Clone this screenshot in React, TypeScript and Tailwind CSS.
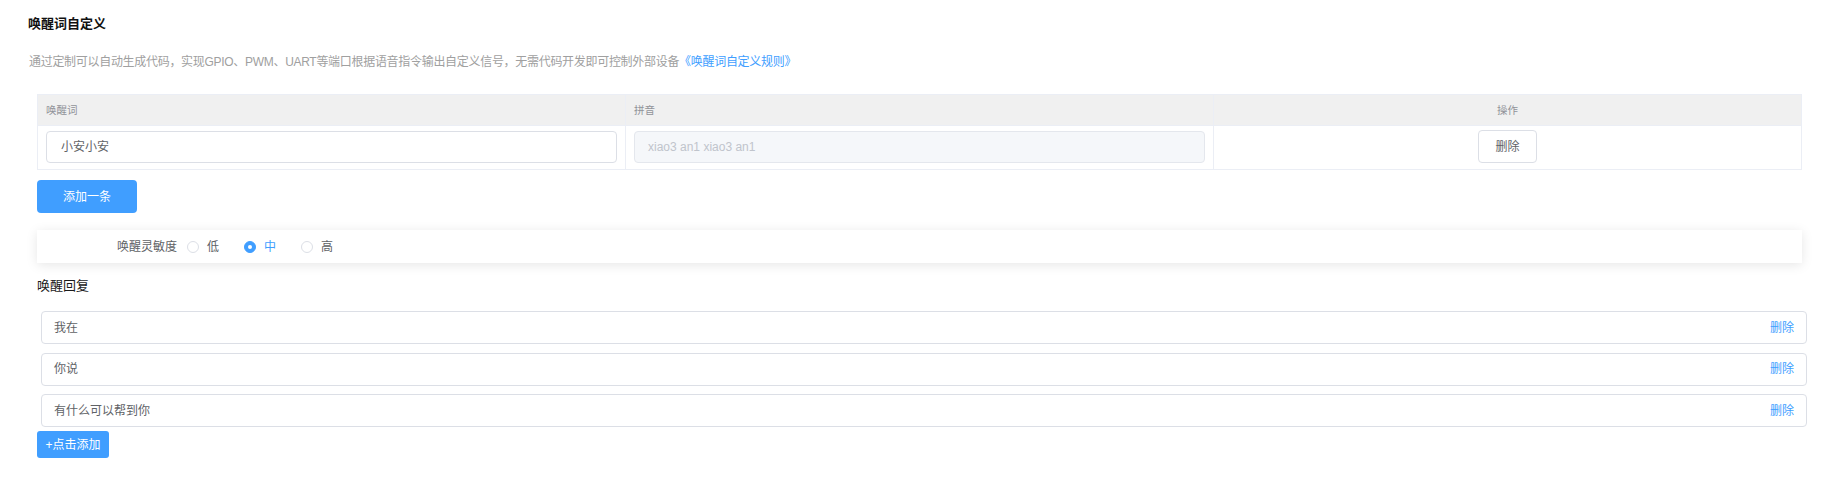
import React from "react";

const replies = ["我在", "你说", "有什么可以帮到你"];

function Radio({ label, checked }: { label: string; checked?: boolean }) {
  return (
    <label className="flex items-center mr-[25px] cursor-pointer">
      {checked ? (
        <span className="w-[12px] h-[12px] rounded-full bg-[#409eff] border border-[#409eff] flex items-center justify-center">
          <span className="w-[4px] h-[4px] rounded-full bg-white" />
        </span>
      ) : (
        <span className="w-[12px] h-[12px] rounded-full bg-white border border-[#dcdfe6]" />
      )}
      <span className={`ml-[8px] text-[12px] leading-[16px] ${checked ? "text-[#409eff]" : "text-[#606266]"}`}>{label}</span>
    </label>
  );
}

export default function App() {
  return (
    <div className="w-[1832px] h-[487px] bg-white font-['Liberation_Sans','Noto_Sans_CJK_SC',sans-serif] pl-[28px] pr-[30px] overflow-hidden">
      <div className="pt-[14px] text-[13px] leading-[19px] font-bold text-[#111]">唤醒词自定义</div>
      <div className="mt-[20px] text-[12px] leading-[18px] text-[#a0a0a0] pl-[1px] tracking-[-0.3px]">
        通过定制可以自动生成代码，实现GPIO、PWM、UART等端口根据语音指令输出自定义信号，无需代码开发即可控制外部设备
        <span className="text-[#409eff]">《唤醒词自定义规则》</span>
      </div>

      <div className="pl-[9px]">
        {/* table */}
        <div className="mt-[23px] border-l border-t border-[#ebeef5]">
          <div className="grid grid-cols-3 h-[31px] bg-[#f0f0f0] text-[10.5px] leading-[14px] text-[#909399]">
            <div className="border-r border-b border-[#ebeef5] flex items-center pl-[8px]">唤醒词</div>
            <div className="border-r border-b border-[#ebeef5] flex items-center pl-[8px]">拼音</div>
            <div className="border-r border-b border-[#ebeef5] flex items-center justify-center">操作</div>
          </div>
          <div className="grid grid-cols-3 h-[44px]">
            <div className="border-r border-b border-[#ebeef5] px-[8px] pt-[5px]">
              <div className="h-[32px] border border-[#dcdfe6] rounded-[4px] flex items-center pl-[14px] text-[12px] text-[#606266] bg-white">
                小安小安
              </div>
            </div>
            <div className="border-r border-b border-[#ebeef5] px-[8px] pt-[5px]">
              <div className="h-[32px] border border-[#e4e7ed] rounded-[4px] flex items-center pl-[13px] text-[12px] text-[#c0c4cc] bg-[#f5f7fa]">
                xiao3 an1 xiao3 an1
              </div>
            </div>
            <div className="border-r border-b border-[#ebeef5] flex justify-center pt-[4px]">
              <button className="w-[59px] h-[33px] border border-[#dcdfe6] rounded-[4px] bg-white text-[12px] text-[#606266]">
                删除
              </button>
            </div>
          </div>
        </div>

        <button className="mt-[10px] w-[100px] h-[33px] rounded-[4px] bg-[#409eff] text-white text-[12px] flex items-center justify-center">
          添加一条
        </button>

        {/* sensitivity */}
        <div className="mt-[17px] h-[33px] bg-white shadow-[0_2px_12px_0_rgba(0,0,0,0.1)] flex items-center">
          <div className="w-[150px] text-right pr-[10px] text-[12px] leading-[16px] text-[#606266]">唤醒灵敏度</div>
          <div className="flex items-center">
            <Radio label="低" />
            <Radio label="中" checked />
            <Radio label="高" />
          </div>
        </div>

        <div className="mt-[14px] text-[13px] leading-[18px] text-[#1a1a1a]">唤醒回复</div>

        <div className="mt-[16px] ml-[4px] -mr-[5px] flex flex-col gap-[8.5px]">
          {replies.map((r) => (
            <div
              key={r}
              className="h-[33px] border border-[#dcdfe6] rounded-[4px] flex items-center justify-between pl-[12px] pr-[12px] text-[12px]"
            >
              <span className="text-[#606266]">{r}</span>
              <span className="text-[#409eff]">删除</span>
            </div>
          ))}
        </div>

        <button className="mt-[4px] w-[72px] h-[27px] rounded-[3px] bg-[#409eff] text-white text-[12px] flex items-center justify-center">
          +点击添加
        </button>
      </div>
    </div>
  );
}
